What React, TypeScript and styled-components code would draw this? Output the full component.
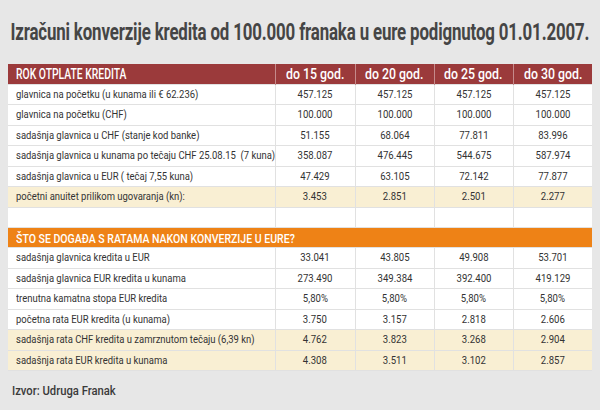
import React from "react";
import styled, { createGlobalStyle } from "styled-components";

const Global = createGlobalStyle`
  html, body { margin: 0; padding: 0; background: #e7e7e7; }
  body { font-family: Roboto, "Liberation Sans", Arial, sans-serif; }
`;

const Page = styled.div`
  width: 600px;
  height: 410px;
  box-sizing: border-box;
  padding: 0 8px;
  background: #e7e7e7;
  overflow: hidden;
`;

const TitleBar = styled.div`
  height: 64px;
  display: flex;
  align-items: center;
  justify-content: center;
`;

const Title = styled.h1`
  margin: 0;
  flex: none;
  font-family: Roboto, "Liberation Sans", sans-serif;
  font-weight: 700;
  font-size: 23px;
  color: #454545;
  white-space: nowrap;
  letter-spacing: -0.2px;
  transform: scaleX(0.733);
  transform-origin: center;
`;

const Squeeze = styled.span<{ $origin?: "left" | "center"; $k?: number }>`
  display: inline-block;
  white-space: nowrap;
  transform: scaleX(${(p) => p.$k ?? 0.87});
  transform-origin: ${(p) => p.$origin ?? "center"};
`;

const Table = styled.table`
  width: 584px;
  border-collapse: collapse;
  table-layout: fixed;
  background: #fff;
  font-size: 11px;
  color: #333;
`;

const Row = styled.tr<{ $tone?: "plain" | "yellow" }>`
  height: 20.5px;
  background: ${(p) => (p.$tone === "yellow" ? "#f9efd3" : "#fff")};
`;

const Label = styled.td`
  padding: 0 0 0 8px;
  border: 1px solid #e1e1e1;
  border-left: none;
  white-space: nowrap;
  overflow: hidden;
`;

const Num = styled.td`
  padding: 0;
  text-align: center;
  border: 1px solid #e1e1e1;
  border-right: none;
`;

const HeadRow = styled.tr`
  height: 20px;
  background: #9b3a3b;
  color: #fff;
`;

const HeadCell = styled.th<{ $left?: boolean }>`
  font-weight: 500;
  font-size: 14px;
  text-align: ${(p) => (p.$left ? "left" : "center")};
  padding: ${(p) => (p.$left ? "0 0 0 8px" : "0")};
  border-left: ${(p) => (p.$left ? "none" : "1px solid #c58a8b")};
  white-space: nowrap;
  overflow: hidden;
`;

const SectionRow = styled.tr`
  height: 20px;
  background: #ee8216;
  color: #fff;
`;

const SectionCell = styled.td`
  padding: 0 0 0 8px;
  font-size: 13.5px;
  font-weight: 500;
`;

const Source = styled.div`
  margin: 12px 0 0 4px;
  font-size: 12.5px;
  font-weight: 500;
  color: #3a3a3a;
`;

type R = { label: string; vals: string[]; yellow?: boolean };

const top: R[] = [
  { label: "glavnica na početku (u kunama ili € 62.236)", vals: ["457.125", "457.125", "457.125", "457.125"] },
  { label: "glavnica na početku (CHF)", vals: ["100.000", "100.000", "100.000", "100.000"] },
  { label: "sadašnja glavnica u CHF (stanje kod banke)", vals: ["51.155", "68.064", "77.811", "83.996"] },
  { label: "sadašnja glavnica u kunama po tečaju CHF 25.08.15\u00a0 (7 kuna)", vals: ["358.087", "476.445", "544.675", "587.974"] },
  { label: "sadašnja glavnica u EUR ( tečaj 7,55 kuna)", vals: ["47.429", "63.105", "72.142", "77.877"] },
  { label: "početni anuitet prilikom ugovaranja (kn):", vals: ["3.453", "2.851", "2.501", "2.277"], yellow: true },
  { label: "", vals: ["", "", "", ""] },
];

const bottom: R[] = [
  { label: "sadašnja glavnica kredita u EUR", vals: ["33.041", "43.805", "49.908", "53.701"] },
  { label: "sadašnja glavnica EUR kredita u kunama", vals: ["273.490", "349.384", "392.400", "419.129"] },
  { label: "trenutna kamatna stopa EUR kredita", vals: ["5,80%", "5,80%", "5,80%", "5,80%"] },
  { label: "početna rata EUR kredita (u kunama)", vals: ["3.750", "3.157", "2.818", "2.606"] },
  { label: "sadašnja rata CHF kredita u zamrznutom tečaju (6,39 kn)", vals: ["4.762", "3.823", "3.268", "2.904"], yellow: true },
  { label: "sadašnja rata EUR kredita u kunama", vals: ["4.308", "3.511", "3.102", "2.857"], yellow: true },
];

const DataRow = ({ r }: { r: R }) => (
  <Row $tone={r.yellow ? "yellow" : "plain"}>
    <Label>
      <Squeeze $origin="left" $k={0.86}>{r.label}</Squeeze>
    </Label>
    {r.vals.map((v, i) => (
      <Num key={i}>
        <Squeeze>{v}</Squeeze>
      </Num>
    ))}
  </Row>
);

const years = ["do 15 god.", "do 20 god.", "do 25 god.", "do 30 god."];

export default function App() {
  return (
    <Page>
      <Global />
      <TitleBar>
        <Title>Izračuni konverzije kredita od 100.000 franaka u eure podignutog 01.01.2007.</Title>
      </TitleBar>
      <Table>
        <colgroup>
          <col style={{ width: 267 }} />
          <col style={{ width: 80 }} />
          <col style={{ width: 79 }} />
          <col style={{ width: 79 }} />
          <col style={{ width: 79 }} />
        </colgroup>
        <thead>
          <HeadRow>
            <HeadCell $left>
              <Squeeze $origin="left" $k={0.74}>ROK OTPLATE KREDITA</Squeeze>
            </HeadCell>
            {years.map((y) => (
              <HeadCell key={y}>
                <Squeeze $k={0.88}>{y}</Squeeze>
              </HeadCell>
            ))}
          </HeadRow>
        </thead>
        <tbody>
          {top.map((r, i) => (
            <DataRow key={i} r={r} />
          ))}
          <SectionRow>
            <SectionCell colSpan={5}>
              <Squeeze $origin="left" $k={0.78}>ŠTO SE DOGAĐA S RATAMA NAKON KONVERZIJE U EURE?</Squeeze>
            </SectionCell>
          </SectionRow>
          {bottom.map((r, i) => (
            <DataRow key={i} r={r} />
          ))}
        </tbody>
      </Table>
      <Source>
        <Squeeze $origin="left" $k={0.9}>Izvor: Udruga Franak</Squeeze>
      </Source>
    </Page>
  );
}
